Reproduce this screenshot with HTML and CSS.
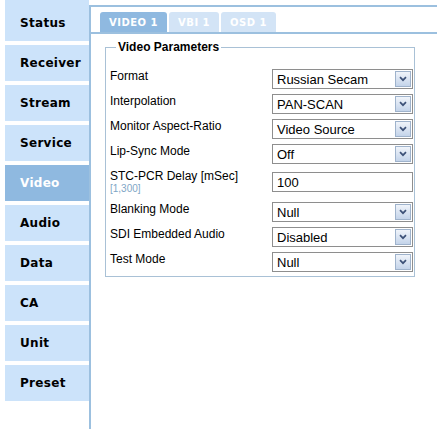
FILE: index.html
```html
<!DOCTYPE html>
<html>
<head>
<meta charset="utf-8">
<link rel="stylesheet" href="styles.css">
</head>
<body>
<div class="page">
  <nav class="sidebar">
    <div class="nav-item first">Status</div>
    <div class="nav-item">Receiver</div>
    <div class="nav-item">Stream</div>
    <div class="nav-item">Service</div>
    <div class="nav-item active">Video</div>
    <div class="nav-item">Audio</div>
    <div class="nav-item">Data</div>
    <div class="nav-item">CA</div>
    <div class="nav-item">Unit</div>
    <div class="nav-item">Preset</div>
  </nav>
  <main class="main">
    <div class="tabs">
      <div class="tab active">VIDEO 1</div>
      <div class="tab">VBI 1</div>
      <div class="tab">OSD 1</div>
    </div>
    <fieldset class="params">
      <legend class="legend">Video Parameters</legend>
      <div class="row">
        <div class="label">Format</div>
        <div class="select"><span class="value">Russian Secam</span><span class="arrow"><svg width="8" height="6" viewBox="0 0 8 6"><path d="M1 1.2 L4 4.2 L7 1.2" fill="none" stroke="#3d5178" stroke-width="1.7"/></svg></span></div>
      </div>
      <div class="row">
        <div class="label">Interpolation</div>
        <div class="select"><span class="value">PAN-SCAN</span><span class="arrow"><svg width="8" height="6" viewBox="0 0 8 6"><path d="M1 1.2 L4 4.2 L7 1.2" fill="none" stroke="#3d5178" stroke-width="1.7"/></svg></span></div>
      </div>
      <div class="row">
        <div class="label">Monitor Aspect-Ratio</div>
        <div class="select"><span class="value">Video Source</span><span class="arrow"><svg width="8" height="6" viewBox="0 0 8 6"><path d="M1 1.2 L4 4.2 L7 1.2" fill="none" stroke="#3d5178" stroke-width="1.7"/></svg></span></div>
      </div>
      <div class="row">
        <div class="label">Lip-Sync Mode</div>
        <div class="select"><span class="value">Off</span><span class="arrow"><svg width="8" height="6" viewBox="0 0 8 6"><path d="M1 1.2 L4 4.2 L7 1.2" fill="none" stroke="#3d5178" stroke-width="1.7"/></svg></span></div>
      </div>
      <div class="row tall">
        <div class="label">STC-PCR Delay [mSec]<div class="hint">[1,300]</div></div>
        <div class="input">100</div>
      </div>
      <div class="row">
        <div class="label">Blanking Mode</div>
        <div class="select"><span class="value">Null</span><span class="arrow"><svg width="8" height="6" viewBox="0 0 8 6"><path d="M1 1.2 L4 4.2 L7 1.2" fill="none" stroke="#3d5178" stroke-width="1.7"/></svg></span></div>
      </div>
      <div class="row">
        <div class="label">SDI Embedded Audio</div>
        <div class="select"><span class="value">Disabled</span><span class="arrow"><svg width="8" height="6" viewBox="0 0 8 6"><path d="M1 1.2 L4 4.2 L7 1.2" fill="none" stroke="#3d5178" stroke-width="1.7"/></svg></span></div>
      </div>
      <div class="row">
        <div class="label">Test Mode</div>
        <div class="select"><span class="value">Null</span><span class="arrow"><svg width="8" height="6" viewBox="0 0 8 6"><path d="M1 1.2 L4 4.2 L7 1.2" fill="none" stroke="#3d5178" stroke-width="1.7"/></svg></span></div>
      </div>
    </fieldset>
  </main>
</div>
</body>
</html>
```

FILE: styles.css
```css
html, body {
  margin: 0;
  padding: 0;
  background: #ffffff;
  font-family: "Liberation Sans", Arial, sans-serif;
  color: #000;
}

.page {
  display: flex;
  height: 429px;
  overflow: hidden;
}

.sidebar {
  width: 84px;
  margin-left: 5px;
  display: flex;
  flex-direction: column;
  gap: 4px;
  flex: none;
}

.nav-item {
  box-sizing: border-box;
  height: 36px;
  padding-left: 15px;
  display: flex;
  align-items: center;
  background: #cce3fa;
  font-family: "DejaVu Sans", Verdana, sans-serif;
  font-weight: bold;
  font-size: 12px;
  letter-spacing: 0.3px;
  color: #000;
}

.nav-item.first {
  height: 41px;
  padding-top: 5px;
}

.nav-item.active {
  background: #8fb9e0;
  color: #fff;
}

.main {
  flex: 1;
  margin-top: 5px;
  border-left: 2px solid #9cc0df;
  border-top: 2px solid #9cc0df;
}

.tabs {
  display: flex;
  align-items: flex-end;
  gap: 2px;
  height: 20px;
  padding: 5px 0 0 9px;
  border-bottom: 2px solid #9cc0df;
}

.tab {
  height: 20px;
  padding: 0 9px;
  display: flex;
  align-items: center;
  border-radius: 3px 3px 0 0;
  background: #d3e4f6;
  color: #fff;
  font-family: "DejaVu Sans", Verdana, sans-serif;
  font-weight: bold;
  font-size: 10px;
  letter-spacing: 0.5px;
}

.tab.active {
  background: #8fb9e0;
}

.params {
  box-sizing: border-box;
  width: 310px;
  min-width: 0;
  margin: 6px 0 0 14px;
  padding: 15px 1px 4px 4px;
  border: 1px solid #a9c1d6;
  display: flex;
  flex-direction: column;
  gap: 5px;
}

.legend {
  margin-left: 6px;
  padding: 0 2px;
  font-weight: bold;
  font-size: 12px;
  line-height: 14px;
}

.row {
  display: flex;
  height: 20px;
}

.row.tall {
  height: 28px;
}

.label {
  width: 162px;
  flex: none;
  font-size: 12px;
  line-height: 14px;
}

.hint {
  font-size: 10px;
  line-height: 11px;
  color: #7fa6c6;
}

.select, .input {
  box-sizing: border-box;
  width: 141px;
  height: 20px;
  border: 1px solid #8e8e8e;
  background: #fff;
  display: flex;
  align-items: center;
  padding-left: 4px;
  font-size: 13px;
}

.input {
  margin-top: 3px;
}

.value {
  flex: 1;
}

.arrow {
  box-sizing: border-box;
  width: 16px;
  height: 16px;
  margin-right: 1px;
  border: 1px solid #9fb3cc;
  background: linear-gradient(#f0f4fa, #c4d4ea);
  display: flex;
  align-items: center;
  justify-content: center;
}
```
